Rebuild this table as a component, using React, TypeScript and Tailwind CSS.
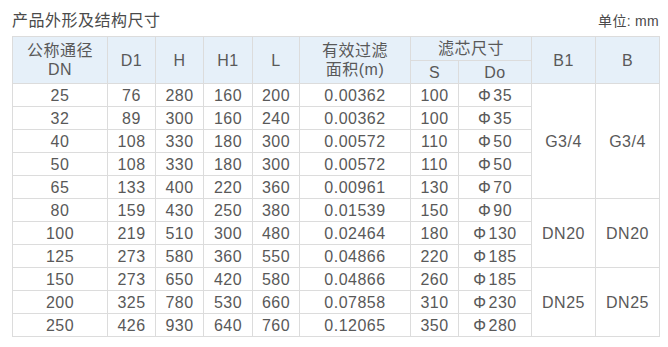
import React from "react";

const rows = [
  ["25", "76", "280", "160", "200", "0.00362", "100", "Φ35"],
  ["32", "89", "300", "160", "240", "0.00362", "100", "Φ35"],
  ["40", "108", "330", "180", "300", "0.00572", "110", "Φ50"],
  ["50", "108", "330", "180", "300", "0.00572", "110", "Φ50"],
  ["65", "133", "400", "220", "360", "0.00961", "130", "Φ70"],
  ["80", "159", "430", "250", "380", "0.01539", "150", "Φ90"],
  ["100", "219", "510", "300", "480", "0.02464", "180", "Φ130"],
  ["125", "273", "580", "360", "550", "0.04866", "220", "Φ185"],
  ["150", "273", "650", "420", "580", "0.04866", "260", "Φ185"],
  ["200", "325", "780", "530", "660", "0.07858", "310", "Φ230"],
  ["250", "426", "930", "640", "760", "0.12065", "350", "Φ280"],
];

// merged B1 / B cells: start row -> [rowSpan, text]
const merged: Record<number, [number, string]> = {
  0: [5, "G3/4"],
  5: [3, "DN20"],
  8: [3, "DN25"],
};

const widths = [95, 48, 48, 49, 47, 111, 48, 73, 64, 64];

const td = "border border-[#dcdcdc] text-center p-0 whitespace-nowrap";
const th = "border border-[#dcdcdc] text-center p-0 font-normal bg-[#e6f0f9] whitespace-nowrap";

export default function App() {
  return (
    <div
      className="w-[668px] h-[347px] bg-white px-[12px] pt-[11px] text-[#595959]"
      style={{ fontFamily: '"Liberation Sans", "Noto Sans CJK SC", sans-serif' }}
    >
      <div className="flex justify-between items-baseline h-[20px] mb-[5px] w-[647px]">
        <p className="text-[16px] leading-[20px] tracking-[0.5px] text-[#4a4a4a]">产品外形及结构尺寸</p>
        <p className="text-[14px] leading-[20px] tracking-[0.3px] text-[#4a4a4a]">单位: mm</p>
      </div>
      <table className="border-collapse table-fixed w-[647px] text-[16px] leading-[19px] tracking-[0.5px]">
        <colgroup>
          {widths.map((w, i) => (
            <col key={i} style={{ width: w }} />
          ))}
        </colgroup>
        <thead>
          <tr className="h-[24px]">
            <th rowSpan={2} className={th}>
              公称通径
              <br />
              DN
            </th>
            <th rowSpan={2} className={th}>D1</th>
            <th rowSpan={2} className={th}>H</th>
            <th rowSpan={2} className={th}>H1</th>
            <th rowSpan={2} className={th}>L</th>
            <th rowSpan={2} className={th}>
              有效过滤
              <br />
              面积(m)
            </th>
            <th colSpan={2} className={th}>滤芯尺寸</th>
            <th rowSpan={2} className={th}>B1</th>
            <th rowSpan={2} className={th}>B</th>
          </tr>
          <tr className="h-[23px]">
            <th className={th}>S</th>
            <th className={th}>Do</th>
          </tr>
        </thead>
        <tbody>
          {rows.map((r, i) => (
            <tr key={i} className="h-[23px]">
              {r.map((c, j) => (
                <td key={j} className={td}>
                  {c.startsWith("Φ") ? (
                    <>
                      Φ<span className="ml-[2px]">{c.slice(1)}</span>
                    </>
                  ) : (
                    c
                  )}
                </td>
              ))}
              {merged[i] && (
                <>
                  <td rowSpan={merged[i][0]} className={td}>
                    {merged[i][1]}
                  </td>
                  <td rowSpan={merged[i][0]} className={td}>
                    {merged[i][1]}
                  </td>
                </>
              )}
            </tr>
          ))}
        </tbody>
      </table>
    </div>
  );
}
